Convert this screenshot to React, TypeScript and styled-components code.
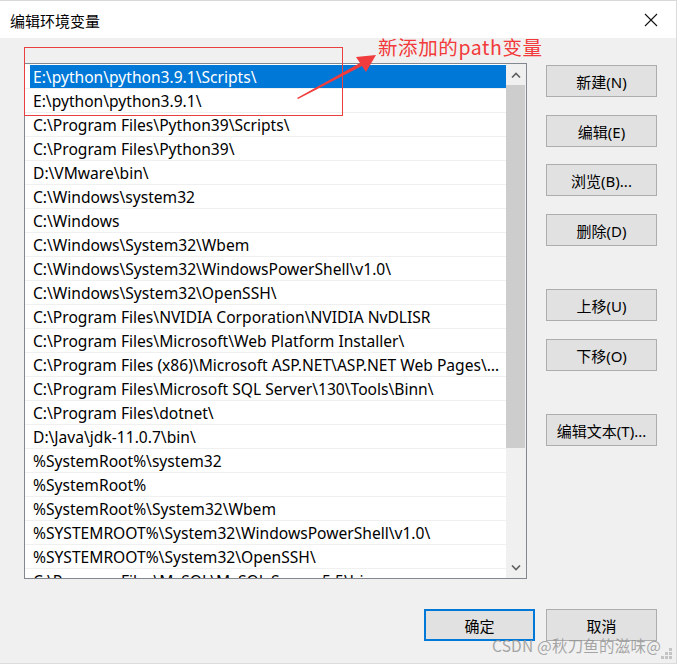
import React from "react";
import styled, { createGlobalStyle } from "styled-components";

const GlobalStyle = createGlobalStyle`
  html, body {
    margin: 0;
    padding: 0;
    background: #f0f0f0;
  }
  * { box-sizing: border-box; }
`;

const UI_FONT = `"Noto Sans", "Noto Sans CJK SC", sans-serif`;

const Window = styled.div`
  position: relative;
  width: 677px;
  height: 664px;
  background: #f0f0f0;
  border-top: 1px solid #d9d9d9;
  border-right: 1px solid #dadada;
  border-bottom: 1px solid #dcdcdc;
  font-family: ${UI_FONT};
  display: flex;
  flex-direction: column;
  overflow: hidden;
`;

const TitleBar = styled.div`
  height: 37px;
  background: #ffffff;
  display: flex;
  align-items: center;
  justify-content: space-between;
  padding: 0 10px 0 10px;
  flex-shrink: 0;
`;

const Title = styled.span`
  font-family: "Noto Sans CJK SC", sans-serif;
  font-size: 15px;
  color: #000;
  margin-top: 1px;
`;

const CloseBox = styled.div`
  width: 36px;
  height: 30px;
  display: flex;
  align-items: center;
  justify-content: center;
  margin-right: -3px;
`;

const Body = styled.div`
  flex: 1;
  display: flex;
  flex-direction: column;
  padding: 25px 19px 0 24px;
`;

const Main = styled.div`
  display: flex;
  gap: 19px;
`;

const ListBox = styled.div`
  width: 504px;
  height: 516px;
  border: 1px solid #828790;
  background: #fff;
  display: flex;
  overflow: hidden;
`;

const Rows = styled.div`
  flex: 1;
  padding-top: 1px;
  overflow: hidden;
  min-width: 0;
`;

const Row = styled.div`
  height: 24px;
  border-bottom: 1px solid #f0f0f0;
  display: flex;
`;

const Cell = styled.div<{ $selected?: boolean }>`
  flex: 1;
  min-width: 0;
  margin-left: 5px;
  padding-left: 3px;
  padding-right: 4px;
  background: ${(p) => (p.$selected ? "#0078d7" : "transparent")};
  color: ${(p) => (p.$selected ? "#ffffff" : "#000000")};
  font-size: 15.6px;
  line-height: 25px;
  white-space: nowrap;
  overflow: hidden;
  text-overflow: ellipsis;
`;

const ScrollBar = styled.div`
  width: 20px;
  background: #f0f0f0;
  display: flex;
  flex-direction: column;
  align-items: stretch;
  flex-shrink: 0;
`;

const ScrollArrow = styled.div`
  height: 21px;
  display: flex;
  align-items: center;
  justify-content: center;
`;

const Thumb = styled.div`
  height: 363px;
  background: #cdcdcd;
  margin: 0 1px 0 0;
`;

const Track = styled.div`
  flex: 1;
`;

const Side = styled.div`
  display: flex;
  flex-direction: column;
  padding-top: 2px;
`;

const Button = styled.button<{ $gap?: number; $primary?: boolean }>`
  width: 111px;
  height: 32px;
  margin-top: ${(p) => p.$gap ?? 0}px;
  background: #e1e1e1;
  border: ${(p) => (p.$primary ? "2px solid #0078d7" : "1px solid #adadad")};
  font-family: ${UI_FONT};
  font-size: 15px;
  color: #000;
  padding: 0;
  cursor: default;
`;

const Footer = styled.div`
  display: flex;
  justify-content: flex-end;
  gap: 11px;
  margin-top: 30px;
`;

const Annotation = styled.div`
  position: absolute;
  left: 24px;
  top: 46px;
  width: 319px;
  height: 69px;
  border: 1px solid #e84040;
  pointer-events: none;
`;

const Note = styled.span`
  position: absolute;
  left: 378px;
  top: 31px;
  font-family: "Noto Sans CJK SC", sans-serif;
  font-size: 19.5px;
  color: #f23a3a;
  letter-spacing: 0.6px;
`;

const Arrow = styled.svg`
  position: absolute;
  left: 290px;
  top: 50px;
`;

const Watermark = styled.span`
  position: absolute;
  right: 15px;
  bottom: 7px;
  font-family: "Noto Sans CJK SC", sans-serif;
  font-size: 15.5px;
  color: rgba(150, 150, 150, 0.85);
  letter-spacing: 0.2px;
`;

const Grip = styled.svg`
  position: absolute;
  right: 3px;
  bottom: 3px;
`;

const paths = [
  "E:\\python\\python3.9.1\\Scripts\\",
  "E:\\python\\python3.9.1\\",
  "C:\\Program Files\\Python39\\Scripts\\",
  "C:\\Program Files\\Python39\\",
  "D:\\VMware\\bin\\",
  "C:\\Windows\\system32",
  "C:\\Windows",
  "C:\\Windows\\System32\\Wbem",
  "C:\\Windows\\System32\\WindowsPowerShell\\v1.0\\",
  "C:\\Windows\\System32\\OpenSSH\\",
  "C:\\Program Files\\NVIDIA Corporation\\NVIDIA NvDLISR",
  "C:\\Program Files\\Microsoft\\Web Platform Installer\\",
  "C:\\Program Files (x86)\\Microsoft ASP.NET\\ASP.NET Web Pages\\v1.0\\",
  "C:\\Program Files\\Microsoft SQL Server\\130\\Tools\\Binn\\",
  "C:\\Program Files\\dotnet\\",
  "D:\\Java\\jdk-11.0.7\\bin\\",
  "%SystemRoot%\\system32",
  "%SystemRoot%",
  "%SystemRoot%\\System32\\Wbem",
  "%SYSTEMROOT%\\System32\\WindowsPowerShell\\v1.0\\",
  "%SYSTEMROOT%\\System32\\OpenSSH\\",
  "C:\\Program Files\\MySQL\\MySQL Server 5.5\\bin",
];

const sideButtons = [
  { label: "新建(N)", gap: 0 },
  { label: "编辑(E)", gap: 18 },
  { label: "浏览(B)...", gap: 17 },
  { label: "删除(D)", gap: 18 },
  { label: "上移(U)", gap: 43 },
  { label: "下移(O)", gap: 18 },
  { label: "编辑文本(T)...", gap: 43 },
];

const Chevron = ({ up }: { up?: boolean }) => (
  <svg width="10" height="6" viewBox="0 0 10 6">
    <path
      d={up ? "M1 5.5 L5 1.5 L9 5.5" : "M1 0.5 L5 4.5 L9 0.5"}
      fill="none"
      stroke="#606060"
      strokeWidth="1.6"
    />
  </svg>
);

export default function App() {
  return (
    <>
      <GlobalStyle />
      <Window>
        <TitleBar>
          <Title>编辑环境变量</Title>
          <CloseBox>
            <svg width="14" height="14" viewBox="0 0 14 14">
              <path d="M1 1 L13 13 M13 1 L1 13" stroke="#111" strokeWidth="1.1" />
            </svg>
          </CloseBox>
        </TitleBar>
        <Body>
          <Main>
            <ListBox>
              <Rows>
                {paths.map((p, i) => (
                  <Row key={i}>
                    <Cell $selected={i === 0}>{p}</Cell>
                  </Row>
                ))}
              </Rows>
              <ScrollBar>
                <ScrollArrow>
                  <Chevron up />
                </ScrollArrow>
                <Thumb />
                <Track />
                <ScrollArrow>
                  <Chevron />
                </ScrollArrow>
              </ScrollBar>
            </ListBox>
            <Side>
              {sideButtons.map((b) => (
                <Button key={b.label} $gap={b.gap}>
                  {b.label}
                </Button>
              ))}
            </Side>
          </Main>
          <Footer>
            <Button $primary>确定</Button>
            <Button>取消</Button>
          </Footer>
        </Body>

        <Annotation />
        <Note>新添加的path变量</Note>
        <Arrow width="90" height="55" viewBox="0 0 90 55">
          <path d="M7 47 L70 12 L66 6 L86 4 L76 21 L72 15 L8 48 Z" fill="#f03c3c" />
        </Arrow>
        <Watermark>CSDN @秋刀鱼的滋味@</Watermark>
        <Grip width="12" height="12" viewBox="0 0 12 12">
          {[
            [8, 0],
            [8, 4],
            [4, 4],
            [8, 8],
            [4, 8],
            [0, 8],
          ].map(([x, y], i) => (
            <rect key={i} x={x} y={y} width="3" height="3" fill="#c4c4c4" />
          ))}
        </Grip>
      </Window>
    </>
  );
}
